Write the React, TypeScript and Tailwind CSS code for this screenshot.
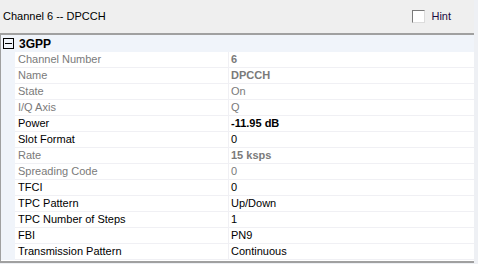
type Row = {
  label: string
  value: string
  readOnly?: boolean
  bold?: boolean
}

const rows: Row[] = [
  { label: "Channel Number", value: "6", readOnly: true, bold: true },
  { label: "Name", value: "DPCCH", readOnly: true, bold: true },
  { label: "State", value: "On", readOnly: true },
  { label: "I/Q Axis", value: "Q", readOnly: true },
  { label: "Power", value: "-11.95 dB", bold: true },
  { label: "Slot Format", value: "0" },
  { label: "Rate", value: "15 ksps", readOnly: true, bold: true },
  { label: "Spreading Code", value: "0", readOnly: true },
  { label: "TFCI", value: "0" },
  { label: "TPC Pattern", value: "Up/Down" },
  { label: "TPC Number of Steps", value: "1" },
  { label: "FBI", value: "PN9" },
  { label: "Transmission Pattern", value: "Continuous" },
]

function PropertyRow({ row }: { row: Row }) {
  const color = row.readOnly ? "text-[#7a7a7a]" : "text-black"
  return (
    <div className="flex h-4 border-b border-[#f0f0f4] bg-white">
      <div className={`w-[214px] shrink-0 border-r border-[#f0f0f4] pl-[3px] leading-[15px] ${color}`}>
        {row.label}
      </div>
      <div className={`pl-[2px] leading-[15px] ${color} ${row.bold ? "font-bold" : ""}`}>{row.value}</div>
    </div>
  )
}

export default function App() {
  return (
    <div
      className="h-[264px] w-[478px] overflow-hidden bg-[#eef0f4] text-[11px]"
      style={{ fontFamily: '"Liberation Sans", Arial, sans-serif' }}
    >
      <div className="flex h-[33px] w-[474px] items-center justify-between bg-[#efefef] pl-[3px] pr-[23px]">
        <span className="text-black">Channel 6 -- DPCCH</span>
        <label className="flex items-center gap-[6px]">
          <span className="h-[13px] w-[13px] border border-t-[#7a7a7a] border-l-[#7a7a7a] border-r-[#dcdcdc] border-b-[#dcdcdc] bg-white" />
          <span className="text-[#1a0a40]">Hint</span>
        </label>
      </div>
      <div className="h-[230px] w-[474px] border-t-2 border-b-2 border-l border-[#a0a0a0] border-t-[#a0a0a0] bg-white">
        <div className="flex h-[17px] items-center bg-[#f0f4fa] pl-[2px]">
          <span className="flex h-[11px] w-[11px] items-center justify-center border border-black">
            <span className="h-px w-[7px] bg-black" />
          </span>
          <span className="ml-[5px] text-[12px] font-bold text-black">3GPP</span>
        </div>
        <div className="flex">
          <div className="w-[14px] shrink-0 bg-[#f0f4fa]" />
          <div className="flex-1">
            {rows.map((row) => (
              <PropertyRow key={row.label} row={row} />
            ))}
          </div>
        </div>
      </div>
    </div>
  )
}
